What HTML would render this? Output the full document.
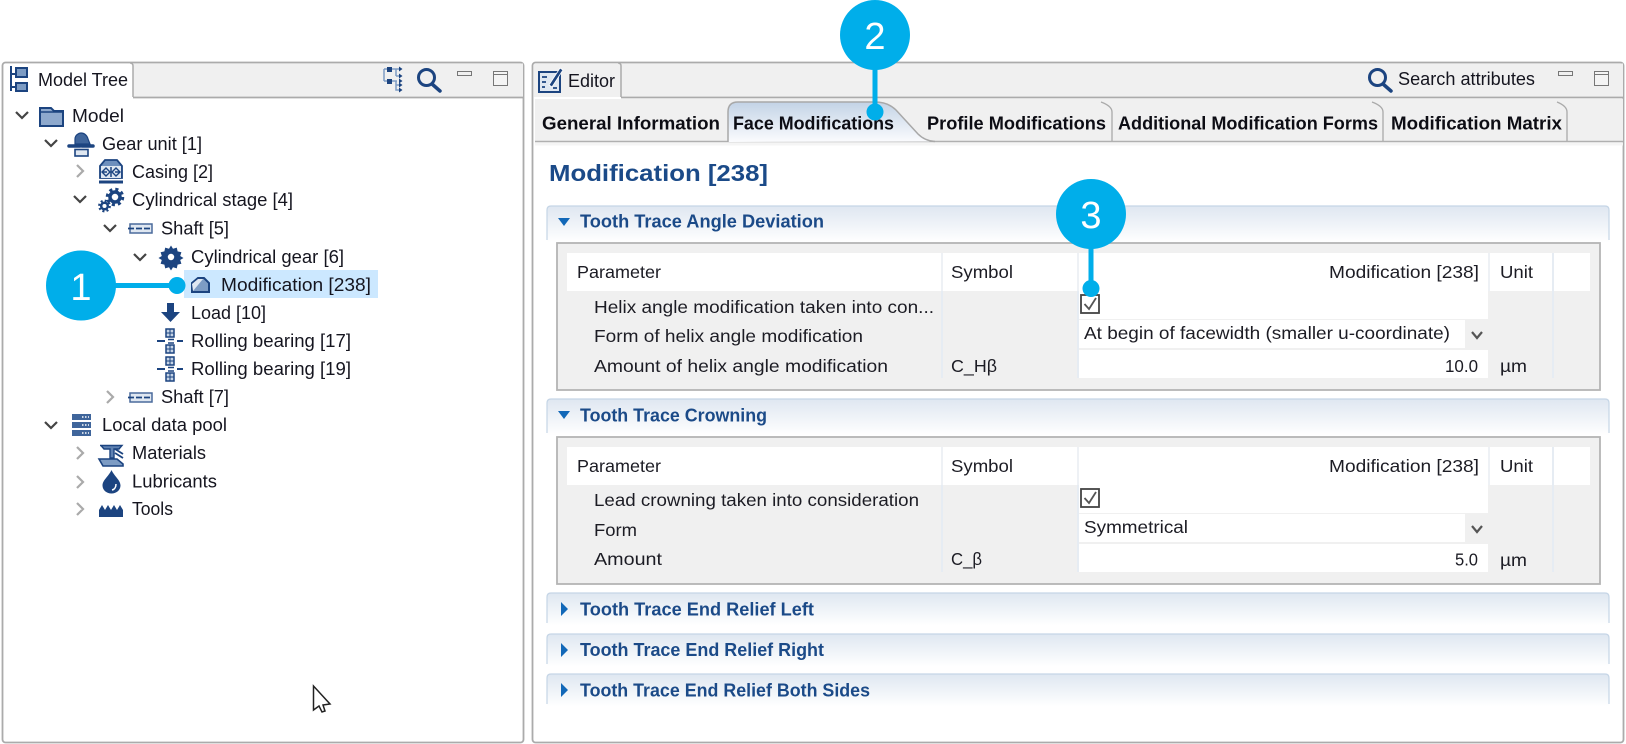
<!DOCTYPE html>
<html><head><meta charset="utf-8"><style>
html,body{margin:0;padding:0;background:#fff;width:1626px;height:744px;overflow:hidden}
svg{display:block;filter:blur(.3px)}
text{font-family:"Liberation Sans",sans-serif;font-size:18px;fill:#15151f}
.b{font-weight:700;fill:#0d0d14}
.s{font-weight:700;fill:#1b4a88}
.t{font-size:17.5px;fill:#1c1c24}
.n{font-size:38px;fill:#fff;font-family:"Liberation Sans",sans-serif}
.ic{fill:none;stroke:#1c4480;stroke-width:2}
.fi{fill:#1c4480}
.ch{fill:none;stroke:#444;stroke-width:2.2}
.cg{fill:none;stroke:#aaa;stroke-width:2.2}
</style></head><body>
<svg width="1626" height="744" viewBox="0 0 1626 744" xmlns="http://www.w3.org/2000/svg">
<defs>
<linearGradient id="g" x1="0" y1="0" x2="0" y2="1"><stop offset="0" stop-color="#dfe7f1"/><stop offset="1" stop-color="#fff"/></linearGradient>
<linearGradient id="tabg" x1="0" y1="0" x2="0" y2="1"><stop offset="0" stop-color="#c3d3e6"/><stop offset="1" stop-color="#fbfcfe"/></linearGradient>
</defs>
<!-- Left panel -->
<rect x="2.500" y="62.500" width="521" height="680" rx="3" fill="#fff" stroke="#ababab" stroke-width="1.800"/>
<rect x="133" y="63.500" width="390" height="33.500" fill="#f0f0f0"/>
<path d="M133 97.500H523" stroke="#ababab" stroke-width="1.800" fill="none"/>
<path d="M133 97V66q0-3-3-3" stroke="#ababab" stroke-width="1.500" fill="none"/>
<!-- model tree tab icon -->
<path d="M11 66V91M11 74H16M11 87H16" class="ic"/>
<rect x="16" y="68" width="11" height="9" fill="#7d9cc4" stroke="#1c4480" stroke-width="2"/>
<rect x="16" y="83" width="11" height="8" fill="#7d9cc4" stroke="#1c4480" stroke-width="2"/>
<text x="38" y="86" textLength="90" lengthAdjust="spacingAndGlyphs">Model Tree</text>
<!-- tool icons -->
<g fill="none" stroke="#7d9cc4" stroke-width="1.500"><path d="M384 69V81M384 69H397M384 81H397M396 69H400M396 76H400M396 69V76M396 81V90H400M396 85H400"/></g>
<g fill="#1c4480"><rect x="387" y="67" width="5" height="5"/><rect x="387" y="79" width="5" height="5"/><path d="M399 66.500l3.500 2.500-3.500 2.500zM399 73.500l3.500 2.500-3.500 2.500zM399 78.500l3.500 2.500-3.500 2.500zM399 82.500l3.500 2.500-3.500 2.500zM399 87.500l3.500 2.500-3.500 2.500z"/></g>
<circle cx="426.500" cy="77.500" r="8" fill="none" stroke="#1c4480" stroke-width="3"/><path d="M432 84L440 91" stroke="#1c4480" stroke-width="3.500" stroke-linecap="round"/>
<rect x="457.500" y="71.500" width="14" height="4" fill="#f0f0f0" stroke="#777"/>
<rect x="493.500" y="71.500" width="14" height="14" fill="#f4f4f4" stroke="#777"/><path d="M493 74.500H507" stroke="#777"/>
<!-- Tree chevrons -->
<path class="ch" d="M16 112l6 6 6-6M45 140l6 6 6-6M74 196l6 6 6-6M104 225l6 6 6-6M134 254l6 6 6-6M45 422l6 6 6-6"/>
<path class="cg" d="M77 165l6 6-6 6M107 391l6 6-6 6M77 447l6 6-6 6M77 476l6 6-6 6M77 503l6 6-6 6"/>
<!-- highlight -->
<rect x="184" y="270" width="194" height="28" fill="#cce8ff"/>
<!-- tree icons -->
<path d="M40 126V108H51L54 111H63V126Z" fill="#8ea9cd" stroke="#1c4480" stroke-width="2"/><path d="M40 112H63" stroke="#1c4480" stroke-width="1.500"/>
<path d="M75 144V139C75 135 79 133 81 133C84 133 87 135 88 139L90 144Z" fill="#3f659b" stroke="#1c4480" stroke-width="1.200"/><path d="M69 146H80M82 146H93" stroke="#1c4480" stroke-width="3.500" stroke-linecap="round"/><rect x="75" y="149.500" width="13" height="6.500" fill="#dfe7f1" stroke="#1c4480" stroke-width="1.600"/>
<path d="M100 178V166L105 160H117L122 166V178Z" fill="#6d8fbd" stroke="#1c4480" stroke-width="1.800"/><rect x="101" y="166" width="20" height="12" fill="#dfe7f1"/><path d="M99 182H123" stroke="#1c4480" stroke-width="3"/><path d="M102 172h5M115 172h5M111 167v10" stroke="#1c4480" stroke-width="1.500"/><path d="M106 168l4 4-4 4-4-4zM116 168l4 4-4 4-4-4z" fill="none" stroke="#1c4480" stroke-width="1.400"/>
<g fill="none" stroke="#1c4480"><circle cx="115" cy="197" r="5" stroke-width="3.500"/><circle cx="115" cy="197" r="7.500" stroke-width="3.500" stroke-dasharray="3 2.900"/><circle cx="104.500" cy="206" r="3.300" stroke-width="2.500"/><circle cx="104.500" cy="206" r="5.200" stroke-width="2.400" stroke-dasharray="2 2.100"/></g>
<g id="sh"><rect x="130" y="224" width="22" height="9" fill="#dfe7f1" stroke="#4a6a9c" stroke-width="1.500"/><path d="M128 228.500H154" stroke="#1c4480" stroke-width="1.800" stroke-dasharray="6 2 6 2 6"/></g>
<use href="#sh" y="169"/>
<path d="M171 245.500l2 3.300 3.800-1.200.8 3.800 3.800.8-1.200 3.800 3.300 2-3.300 2 1.200 3.800-3.800.8-.8 3.800-3.800-1.200-2 3.300-2-3.300-3.800 1.200-.8-3.800-3.800-.8 1.200-3.800-3.300-2 3.300-2-1.200-3.800 3.800-.8.8-3.800 3.800 1.200z" class="fi"/><circle cx="171" cy="257" r="3.200" fill="#fff"/>
<path d="M192 292V283L198 278H204L209 283V292Z" fill="#7d9cc4" stroke="#1c4480" stroke-width="2"/><path d="M193 291L203 279H198L192 284Z" fill="#dfe7f1"/>
<path d="M167 303H174V312H180L170.500 322L161 312H167Z" class="fi"/>
<g id="be"><path d="M157 341H165M177 341H183" stroke="#1c4480" stroke-width="2"/><path d="M168 339.500H174M168 343H174" stroke="#1c4480" stroke-width="1.500"/><rect x="166" y="329" width="8" height="8" fill="#c6d4e6" stroke="#1c4480" stroke-width="1.500"/><rect x="166" y="345" width="8" height="8" fill="#c6d4e6" stroke="#1c4480" stroke-width="1.500"/><path d="M170 329V337M166 333H174M170 345V353M166 349H174" stroke="#1c4480"/></g>
<use href="#be" y="28"/>
<g fill="#3f659b"><rect x="72" y="414" width="19" height="6"/><rect x="72" y="422" width="19" height="6"/><rect x="72" y="430" width="19" height="6"/></g><path d="M82 417H89M82 425H89M82 433H89" stroke="#fff" stroke-dasharray="1.500 1.500" stroke-width="1.500"/>
<path d="M100 445.500H122L119 449H114V458H110V449H104L101 445.500Z" fill="#5f82b2" stroke="#1c4480" stroke-width="1.400"/><path d="M115 449L123 454M115 453L123 458" stroke="#1c4480" stroke-width="1.800"/><path d="M99 459H117L123 464V466H103Z" fill="#7d9cc4" stroke="#1c4480" stroke-width="1.600"/>
<path d="M111.500 470C109 476 102.500 480 102.500 485.500C102.500 490 106.500 493.500 111.500 493.500C116.500 493.500 120.500 490 120.500 485.500C120.500 480 114 476 111.500 470Z" class="fi"/><path d="M116 484C116 487 114.500 489.500 112 490" stroke="#fff" stroke-width="1.500" fill="none"/>
<path d="M99 517V510L102 505L105 510L108 505L111 510L114 505L117 510L120 505L123 510V517Z" class="fi"/>
<!-- Tree text -->
<text x="72" y="122" textLength="52" lengthAdjust="spacingAndGlyphs">Model</text>
<text x="102" y="150" textLength="100" lengthAdjust="spacingAndGlyphs">Gear unit [1]</text>
<text x="132" y="178" textLength="81" lengthAdjust="spacingAndGlyphs">Casing [2]</text>
<text x="132" y="206" textLength="161" lengthAdjust="spacingAndGlyphs">Cylindrical stage [4]</text>
<text x="161" y="234.500" textLength="68" lengthAdjust="spacingAndGlyphs">Shaft [5]</text>
<text x="191" y="263" textLength="153" lengthAdjust="spacingAndGlyphs">Cylindrical gear [6]</text>
<text x="221" y="291" textLength="150" lengthAdjust="spacingAndGlyphs">Modification [238]</text>
<text x="191" y="319" textLength="75" lengthAdjust="spacingAndGlyphs">Load [10]</text>
<text x="191" y="347" textLength="160" lengthAdjust="spacingAndGlyphs">Rolling bearing [17]</text>
<text x="191" y="375" textLength="160" lengthAdjust="spacingAndGlyphs">Rolling bearing [19]</text>
<text x="161" y="403" textLength="68" lengthAdjust="spacingAndGlyphs">Shaft [7]</text>
<text x="102" y="431" textLength="125" lengthAdjust="spacingAndGlyphs">Local data pool</text>
<text x="132" y="459" textLength="74" lengthAdjust="spacingAndGlyphs">Materials</text>
<text x="132" y="487.500" textLength="85" lengthAdjust="spacingAndGlyphs">Lubricants</text>
<text x="132" y="515" textLength="41" lengthAdjust="spacingAndGlyphs">Tools</text>
<!-- cursor -->
<path d="M313.500 686V710L319 706L322 712L325 711L323 705L330 704Z" fill="#fff" stroke="#222" stroke-width="1.500"/>

<!-- Right panel -->
<rect x="532.500" y="62.500" width="1091" height="680" rx="3" fill="#fff" stroke="#ababab" stroke-width="1.800"/>
<rect x="621" y="63.500" width="1002" height="33.500" fill="#f0f0f0"/>
<rect x="534" y="64" width="87" height="33" fill="#f0f0f0"/>
<rect x="535" y="99" width="1088" height="42" fill="#f0f0f0"/>
<path d="M621 97.500H1623" stroke="#ababab" stroke-width="1.800" fill="none"/>
<path d="M621 97V66q0-3-3-3" stroke="#ababab" stroke-width="1.500" fill="none"/>
<!-- editor icon -->
<rect x="539" y="72" width="21" height="20" fill="#dfe7f1" stroke="#1c4480" stroke-width="2"/><path d="M542 77H547M542 82H546M542 87H545M553 88H557" stroke="#1c4480" stroke-width="1.800"/><path d="M549 85L560 68L563 70L552 87Z" fill="#1c4480" stroke="#fff" stroke-width=".8"/>
<text x="568" y="87" textLength="47" lengthAdjust="spacingAndGlyphs">Editor</text>
<circle cx="1377.500" cy="77.500" r="8" fill="none" stroke="#1c4480" stroke-width="3"/><path d="M1383 84L1391 91" stroke="#1c4480" stroke-width="3.500" stroke-linecap="round"/>
<text x="1398" y="85" textLength="137" lengthAdjust="spacingAndGlyphs">Search attributes</text>
<rect x="1558.500" y="71.500" width="14" height="4" fill="#f0f0f0" stroke="#777"/>
<rect x="1594.500" y="71.500" width="14" height="14" fill="#f4f4f4" stroke="#777"/><path d="M1594 74.500H1608" stroke="#777"/>
<!-- tab row -->
<path d="M535 141.500H1623" stroke="#b0b0b0" stroke-width="1.500"/>
<rect x="535" y="142.500" width="1088" height="3" fill="#f5f5f5"/>
<path d="M728 142V112Q728 102 738 102H875Q888 102 896 110L918 134Q925 141 935 141.500Z" fill="url(#tabg)"/>
<path d="M728 142V112Q728 102 738 102H875Q888 102 896 110L918 134Q925 141 935 141.500" fill="none" stroke="#a8a8a8" stroke-width="1.500"/>
<path d="M1112 141V112Q1112 106 1101 102M1383 141V112Q1383 106 1372 102M1567 141V112Q1567 106 1557 102" fill="none" stroke="#aaa" stroke-width="1.300"/>
<text class="b" x="542" y="129.500" textLength="178" lengthAdjust="spacingAndGlyphs">General Information</text>
<text class="b" x="733" y="129.500" textLength="161" lengthAdjust="spacingAndGlyphs">Face Modifications</text>
<text class="b" x="927" y="129.500" textLength="179" lengthAdjust="spacingAndGlyphs">Profile Modifications</text>
<text class="b" x="1118" y="129.500" textLength="260" lengthAdjust="spacingAndGlyphs">Additional Modification Forms</text>
<text class="b" x="1391" y="129.500" textLength="171" lengthAdjust="spacingAndGlyphs">Modification Matrix</text>
<text class="s" style="font-size:23px" x="549" y="181" textLength="219" lengthAdjust="spacingAndGlyphs">Modification [238]</text>

<!-- Sections -->
<g fill="url(#g)" stroke="none">
<path d="M547 242V210Q547 206 551 206H1605Q1609 206 1609 210V242Z"/>
<path d="M547 435V403Q547 399 551 399H1605Q1609 399 1609 403V435Z"/>
<path d="M547 625V597Q547 593 551 593H1605Q1609 593 1609 597V625Z"/>
<path d="M547 666V638Q547 634 551 634H1605Q1609 634 1609 638V666Z"/>
<path d="M547 706V678Q547 674 551 674H1605Q1609 674 1609 678V706Z"/>
</g>
<path d="M547 240V210Q547 206 551 206H1605Q1609 206 1609 210V240M547 433V403Q547 399 551 399H1605Q1609 399 1609 403V433M547 623V597Q547 593 551 593H1605Q1609 593 1609 597V623M547 664V638Q547 634 551 634H1605Q1609 634 1609 638V664M547 704V678Q547 674 551 674H1605Q1609 674 1609 678V704" fill="none" stroke="#c5d5e6" stroke-width="1.200"/>
<path d="M558 218H570L564 226ZM558 411H570L564 419ZM561 602L568 609L561 616ZM561 643L568 650L561 657ZM561 683L568 690L561 697Z" fill="#1268b8"/>
<text class="s" x="580" y="227.500" textLength="244" lengthAdjust="spacingAndGlyphs">Tooth Trace Angle Deviation</text>
<text class="s" x="580" y="421.500" textLength="187" lengthAdjust="spacingAndGlyphs">Tooth Trace Crowning</text>
<text class="s" x="580" y="615.500" textLength="234" lengthAdjust="spacingAndGlyphs">Tooth Trace End Relief Left</text>
<text class="s" x="580" y="656" textLength="244" lengthAdjust="spacingAndGlyphs">Tooth Trace End Relief Right</text>
<text class="s" x="580" y="696.500" textLength="290" lengthAdjust="spacingAndGlyphs">Tooth Trace End Relief Both Sides</text>

<!-- Table 1 -->
<g id="tb">
<rect x="557" y="243" width="1043" height="147" fill="#f0f0f0" stroke="#b4b4b4" stroke-width="1.800"/>
<rect x="567" y="253" width="1023" height="38" fill="#fff"/>
<rect x="941" y="253" width="2" height="38" fill="#eef1f5"/>
<rect x="1077" y="253" width="2" height="38" fill="#eef1f5"/>
<rect x="1488" y="253" width="2" height="38" fill="#eef1f5"/>
<rect x="1552" y="253" width="2" height="125" fill="#e6ecf3"/>
<rect x="941" y="291" width="2" height="87" fill="#e6ecf3"/>
<rect x="1077" y="291" width="2" height="87" fill="#e6ecf3"/>
<rect x="1079" y="291" width="409" height="28" fill="#fff"/>
<rect x="1079" y="320" width="386" height="28" fill="#fff"/>
<rect x="1079" y="350" width="409" height="28" fill="#fff"/>
<text class="t" x="577" y="278" textLength="84" lengthAdjust="spacingAndGlyphs">Parameter</text>
<text class="t" x="951" y="278" textLength="62" lengthAdjust="spacingAndGlyphs">Symbol</text>
<text class="t" x="1329" y="278" textLength="150" lengthAdjust="spacingAndGlyphs">Modification [238]</text>
<text class="t" x="1500" y="278" textLength="33" lengthAdjust="spacingAndGlyphs">Unit</text>
<text class="t" x="1500" y="372" textLength="27" lengthAdjust="spacingAndGlyphs">µm</text>
<rect x="1081" y="295" width="18" height="18" fill="#fff" stroke="#444" stroke-width="1.800"/>
<path d="M1084.500 304L1089 309L1096 298" fill="none" stroke="#555" stroke-width="1.800"/>
<path d="M1472 332L1477 338L1482 332" fill="none" stroke="#555" stroke-width="2.200"/>
</g>
<use href="#tb" y="194"/>
<text class="t" x="594" y="313" textLength="340" lengthAdjust="spacingAndGlyphs">Helix angle modification taken into con...</text>
<text class="t" x="594" y="342" textLength="269" lengthAdjust="spacingAndGlyphs">Form of helix angle modification</text>
<text class="t" x="594" y="372" textLength="294" lengthAdjust="spacingAndGlyphs">Amount of helix angle modification</text>
<text class="t" x="951" y="372" textLength="46" lengthAdjust="spacingAndGlyphs">C_Hβ</text>
<text class="t" x="1084" y="339" textLength="366" lengthAdjust="spacingAndGlyphs">At begin of facewidth (smaller u-coordinate)</text>
<text class="t" x="1445" y="372" textLength="33" lengthAdjust="spacingAndGlyphs">10.0</text>
<text class="t" x="594" y="506" textLength="325" lengthAdjust="spacingAndGlyphs">Lead crowning taken into consideration</text>
<text class="t" x="594" y="536" textLength="43" lengthAdjust="spacingAndGlyphs">Form</text>
<text class="t" x="594" y="565" textLength="68" lengthAdjust="spacingAndGlyphs">Amount</text>
<text class="t" x="951" y="565" textLength="31" lengthAdjust="spacingAndGlyphs">C_β</text>
<text class="t" x="1084" y="533" textLength="104" lengthAdjust="spacingAndGlyphs">Symmetrical</text>
<text class="t" x="1455" y="565.500" textLength="23" lengthAdjust="spacingAndGlyphs">5.0</text>

<!-- Callouts -->
<g fill="#00aeea" stroke="none">
<circle cx="81" cy="285.500" r="35"/><rect x="110" y="283" width="67" height="5"/><circle cx="177" cy="285.500" r="8.500"/>
<circle cx="875" cy="35" r="35"/><rect x="872.500" y="65" width="5" height="47"/><circle cx="875" cy="112" r="8.500"/>
<circle cx="1091" cy="214" r="35"/><rect x="1088.500" y="245" width="5" height="43"/><circle cx="1091" cy="288.500" r="8.500"/>
</g>
<text class="n" x="81" y="300" text-anchor="middle">1</text>
<text class="n" x="875" y="49" text-anchor="middle">2</text>
<text class="n" x="1091" y="228" text-anchor="middle">3</text>
</svg>
</body></html>
